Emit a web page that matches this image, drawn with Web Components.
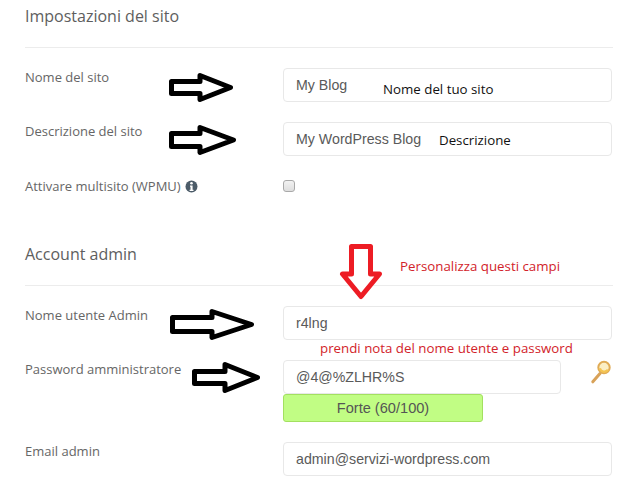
<!DOCTYPE html>
<html lang="it">
<head>
<meta charset="utf-8">
<title>Impostazioni del sito</title>
<style>
    html, body { margin: 0; background: #fff; }
</style>
</head>
<body>
<install-form>
    <form-section heading="Impostazioni del sito">
        <form-row label="Nome del sito"><text-field>My Blog</text-field></form-row>
        <form-row label="Descrizione del sito"><text-field>My WordPress Blog</text-field></form-row>
        <form-row label="Attivare multisito (WPMU)" info><check-box></check-box></form-row>
    </form-section>
    <form-section heading="Account admin">
        <form-row label="Nome utente Admin"><text-field>r4lng</text-field></form-row>
        <form-row label="Password amministratore">
            <password-field value="@4@%ZLHR%S" strength="Forte (60/100)"></password-field>
        </form-row>
        <form-row label="Email admin"><text-field>admin@servizi-wordpress.com</text-field></form-row>
    </form-section>

    <!-- annotations drawn on top of the screenshot -->
    <shape-arrow slot="notes" x="169" y="72" w="65" h="31" head="31" shaft="17"></shape-arrow>
    <shape-arrow slot="notes" x="169" y="124" w="68" h="32" head="31" shaft="18"></shape-arrow>
    <shape-arrow slot="notes" x="170" y="308" w="85" h="33" head="42" shaft="19"></shape-arrow>
    <shape-arrow slot="notes" x="192" y="361" w="69" h="33" head="33" shaft="17"></shape-arrow>
    <shape-arrow slot="notes" x="339" y="244" w="44" h="56" head="30" shaft="24" dir="down" color="#ed1c24"></shape-arrow>
    <note-text slot="notes" x="383" y="80">Nome del tuo sito</note-text>
    <note-text slot="notes" x="439" y="131">Descrizione</note-text>
    <note-text slot="notes" x="400" y="257" color="#d2232a">Personalizza questi campi</note-text>
    <note-text slot="notes" x="320" y="339" color="#d2232a">prendi nota del nome utente e password</note-text>
</install-form>

<script>
const installFormTemplate = document.createElement('template');
installFormTemplate.innerHTML = `
    <style>
        :host {
            display: block;
            position: relative;
            width: 641px;
            height: 487px;
            overflow: hidden;
            box-sizing: border-box;
            padding: 0 28px 0 25px;
            background: #fff;
        }
        .sections {
            display: flex;
            flex-direction: column;
            gap: 42px;
        }
    </style>
    <div class="sections"><slot></slot></div>
    <slot name="notes"></slot>
`;
class InstallForm extends HTMLElement {
    constructor() {
        super();
        this.attachShadow({ mode: 'open' });
        this.shadowRoot.appendChild(installFormTemplate.content.cloneNode(true));
    }
}

const formSectionTemplate = document.createElement('template');
formSectionTemplate.innerHTML = `
    <style>
        :host { display: block; }
        h2 {
            box-sizing: border-box;
            height: 48px;
            margin: 0;
            padding-top: 5px;
            border-bottom: 1px solid #ececec;
            font: 400 16px/22px "Open Sans", sans-serif;
            color: #5e5e5e;
        }
        .rows {
            display: flex;
            flex-direction: column;
            gap: 20px;
            padding-top: 20px;
        }
    </style>
    <h2></h2>
    <div class="rows"><slot></slot></div>
`;
class FormSection extends HTMLElement {
    constructor() {
        super();
        this.attachShadow({ mode: 'open' });
        this.shadowRoot.appendChild(formSectionTemplate.content.cloneNode(true));
    }

    connectedCallback() {
        this.shadowRoot.querySelector('h2').textContent = this.getAttribute('heading');
    }
}

const formRowTemplate = document.createElement('template');
formRowTemplate.innerHTML = `
    <style>
        :host {
            display: grid;
            grid-template-columns: 258px 329px;
            align-items: start;
        }
        .label {
            display: flex;
            align-items: center;
            gap: 4px;
            font: 400 13px/18px "Open Sans", sans-serif;
            color: #666;
        }
        svg { display: none; }
        :host([info]) .label { line-height: 20px; }
        :host([info]) svg { display: block; }
    </style>
    <div class="label">
        <span></span>
        <svg width="13" height="13" viewBox="0 0 13 13">
            <circle cx="6.500" cy="6.500" r="6" fill="#4c5c69"/>
            <circle cx="6.500" cy="3.300" r="1.300" fill="#fff"/>
            <path d="M5 5.500h2.600v4.200h.9v1.200h-3.900v-1.200h.9v-3H5z" fill="#fff"/>
        </svg>
    </div>
    <div><slot></slot></div>
`;
class FormRow extends HTMLElement {
    constructor() {
        super();
        this.attachShadow({ mode: 'open' });
        this.shadowRoot.appendChild(formRowTemplate.content.cloneNode(true));
    }

    connectedCallback() {
        this.shadowRoot.querySelector('span').textContent = this.getAttribute('label');
    }
}

const textFieldTemplate = document.createElement('template');
textFieldTemplate.innerHTML = `
    <style>
        :host {
            display: flex;
            align-items: center;
            box-sizing: border-box;
            height: 34px;
            padding: 0 12px;
            border: 1px solid #e8e8e8;
            border-radius: 4px;
            background: #fff;
            font: 400 14.2px/20px "Liberation Sans", Arial, sans-serif;
            color: #5a5a5a;
        }
    </style>
    <slot></slot>
`;
class TextField extends HTMLElement {
    constructor() {
        super();
        this.attachShadow({ mode: 'open' });
        this.shadowRoot.appendChild(textFieldTemplate.content.cloneNode(true));
    }
}

const checkBoxTemplate = document.createElement('template');
checkBoxTemplate.innerHTML = `
    <style>
        :host {
            display: flex;
            align-items: center;
            height: 20px;
        }
        input {
            appearance: none;
            box-sizing: border-box;
            width: 12px;
            height: 12px;
            margin: 0;
            border: 1px solid #a9a9a9;
            border-radius: 3px;
            background: linear-gradient(#f2f2f2, #dedede);
        }
    </style>
    <input type="checkbox">
`;
class CheckBox extends HTMLElement {
    constructor() {
        super();
        this.attachShadow({ mode: 'open' });
        this.shadowRoot.appendChild(checkBoxTemplate.content.cloneNode(true));
    }
}

const passwordFieldTemplate = document.createElement('template');
passwordFieldTemplate.innerHTML = `
    <style>
        :host { display: block; }
        .line {
            display: flex;
            align-items: flex-start;
            justify-content: space-between;
        }
        text-field { width: 278px; }
        .meter {
            box-sizing: border-box;
            width: 200px;
            height: 28px;
            border: 1px solid #a3e060;
            border-radius: 3px;
            background: #c1fd84;
            font: 400 14.6px/26px "Liberation Sans", Arial, sans-serif;
            color: #555;
            text-align: center;
        }
    </style>
    <div class="line">
        <text-field></text-field>
        <svg width="22" height="24" viewBox="0 0 22 24">
            <path d="M10 13.500 2.800 21.800" stroke="#d8a259" stroke-width="3" stroke-linecap="round"/>
            <circle cx="14" cy="7.500" r="5.700" fill="#fbeec4" stroke="#e0ab55" stroke-width="2"/>
            <path d="M9.800 8.300a4.600 4.600 0 0 0 8.200 1.500" fill="none" stroke="#f4c452" stroke-width="2.400"/>
        </svg>
    </div>
    <div class="meter"></div>
`;
class PasswordField extends HTMLElement {
    constructor() {
        super();
        this.attachShadow({ mode: 'open' });
        this.shadowRoot.appendChild(passwordFieldTemplate.content.cloneNode(true));
    }

    connectedCallback() {
        this.shadowRoot.querySelector('text-field').textContent = this.getAttribute('value');
        this.shadowRoot.querySelector('.meter').textContent = this.getAttribute('strength');
    }
}

// hollow block arrow; x/y/w/h are the outer box on the canvas
class ShapeArrow extends HTMLElement {
    constructor() {
        super();
        this.attachShadow({ mode: 'open' });
    }

    connectedCallback() {
        const num = name => Number(this.getAttribute(name));
        const [x, y, w, h, head, shaft] = ['x', 'y', 'w', 'h', 'head', 'shaft'].map(num);
        const color = this.getAttribute('color') || '#000';
        const s = 5;
        const i = s / 2;
        let points;
        if (this.getAttribute('dir') === 'down') {
            const a = (w - shaft) / 2;
            points = [[a + i, i], [w - a - i, i], [w - a - i, head], [w - i - 1, head], [w / 2, h - i - 1],
                [i + 1, head], [a + i, head], [a + i, i]];
        } else {
            const a = (h - shaft) / 2;
            points = [[i, a + i], [head, a + i], [head, i + 1], [w - i - 1, h / 2], [head, h - i - 1],
                [head, h - a - i], [i, h - a - i]];
        }
        this.shadowRoot.innerHTML = `
            <style>
                :host { position: absolute; left: ${x}px; top: ${y}px; width: ${w}px; height: ${h}px; }
                svg { display: block; }
            </style>
            <svg width="${w}" height="${h}" viewBox="0 0 ${w} ${h}">
                <polygon points="${points.map(p => p.join(',')).join(' ')}" fill="#fff" stroke="${color}"
                    stroke-width="${s}" stroke-linejoin="round"/>
            </svg>
        `;
    }
}

class NoteText extends HTMLElement {
    constructor() {
        super();
        this.attachShadow({ mode: 'open' });
    }

    connectedCallback() {
        this.shadowRoot.innerHTML = `
            <style>
                :host {
                    position: absolute;
                    left: ${this.getAttribute('x')}px;
                    top: ${this.getAttribute('y')}px;
                    white-space: nowrap;
                    font: 400 13.3px/18px "Open Sans", sans-serif;
                    color: ${this.getAttribute('color') || '#111'};
                }
            </style>
            <slot></slot>
        `;
    }
}

const elements = {
    'install-form': InstallForm,
    'form-section': FormSection,
    'form-row': FormRow,
    'text-field': TextField,
    'check-box': CheckBox,
    'password-field': PasswordField,
    'shape-arrow': ShapeArrow,
    'note-text': NoteText
};
Object.keys(elements).forEach(name => {
    if (!window.customElements.get(name)) {
        window.customElements.define(name, elements[name]);
    }
});
</script>
</body>
</html>
